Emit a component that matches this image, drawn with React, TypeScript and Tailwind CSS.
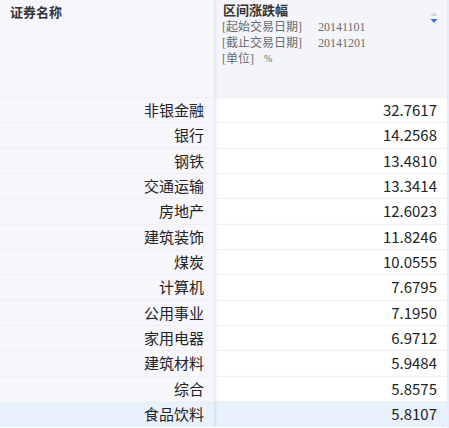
const rows: [string, string][] = [
  ['非银金融', '32.7617'],
  ['银行', '14.2568'],
  ['钢铁', '13.4810'],
  ['交通运输', '13.3414'],
  ['房地产', '12.6023'],
  ['建筑装饰', '11.8246'],
  ['煤炭', '10.0555'],
  ['计算机', '7.6795'],
  ['公用事业', '7.1950'],
  ['家用电器', '6.9712'],
  ['建筑材料', '5.9484'],
  ['综合', '5.8575'],
  ['食品饮料', '5.8107'],
];

const serif = "font-['Liberation_Serif','Noto_Sans_CJK_SC',serif]";
const sans = "font-['Noto_Sans_CJK_SC','Noto_Sans',sans-serif]";

export default function App() {
  return (
    <div className="w-[449px] h-[428px] overflow-hidden bg-white flex">
      <div className="w-[447px] flex flex-col">
        <div className="flex h-[98px] border-b border-[#eceef5]">
          <div className={`w-[214px] bg-[#f6f6fb] pl-[10px] pt-[3px] text-[13px] font-bold text-[#333] ${serif}`}>
            证券名称
          </div>
          <div className={`flex-1 bg-[#f4f5fb] pl-[8px] pt-[3px] pr-[9px] flex justify-between shadow-[inset_3px_0_3px_-2px_rgba(180,185,205,0.45)] ${serif}`}>
            <div className="leading-[16px]">
              <div className="text-[13px] font-bold text-[#333] pl-[1px]">区间涨跌幅</div>
              <div className="text-[12px] text-[#6b6b6b] flex gap-[16px]"><span>[起始交易日期]</span><span>20141101</span></div>
              <div className="text-[12px] text-[#6b6b6b] flex gap-[16px]"><span>[截止交易日期]</span><span>20141201</span></div>
              <div className="text-[12px] text-[#6b6b6b] flex gap-[10px]"><span>[单位]</span><span className="text-[10px]">%</span></div>
            </div>
            <svg width="8" height="14" viewBox="0 0 8 14" className="mt-[8px]">
              <path d="M4 1 L7.5 5 L0.5 5 Z" fill="#cfd3de" />
              <path d="M4 12 L7.5 8 L0.5 8 Z" fill="#2f6fe0" />
            </svg>
          </div>
        </div>
        <div className={`flex-1 flex flex-col ${sans} text-[15px] text-[#222]`}>
          {rows.map(([name, v], i) => {
            const last = i === rows.length - 1;
            return (
              <div key={name} className={`flex h-[25.33px] border-b border-[#eef0f6] ${last ? 'bg-[#e9f1fd]' : ''}`}>
                <div className={`w-[214px] flex items-center justify-end pr-[10px] ${last ? 'bg-[#e9f1fd]' : 'bg-[#f6f6fb]'}`}>{name}</div>
                <div className="flex-1 flex items-center justify-end pr-[10px] shadow-[inset_4px_0_4px_-3px_rgba(170,175,200,0.45)]">{v}</div>
              </div>
            );
          })}
        </div>
      </div>
      <div className="w-[2px] bg-[#e6ecf8]" />
    </div>
  );
}
